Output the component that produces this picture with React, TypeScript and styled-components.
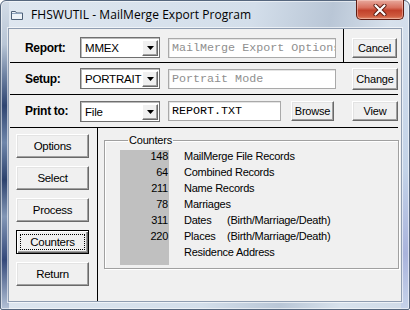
import React from 'react'
import styled, { createGlobalStyle, css } from 'styled-components'

const GlobalStyle = createGlobalStyle`
  html, body {
    margin: 0;
    padding: 0;
    background: #fff;
  }
  body {
    width: 410px;
    height: 310px;
    overflow: hidden;
    font-family: "Liberation Sans", Arial, sans-serif;
    font-size: 11px;
    color: #000;
  }
`

const Window = styled.div`
  box-sizing: border-box;
  width: 410px;
  height: 310px;
  display: flex;
  flex-direction: column;
  padding: 0 7px 7px 7px;
  border: 1px solid #56677e;
  border-radius: 6px 6px 2px 2px;
  box-shadow: inset 0 0 0 1px rgba(255, 255, 255, 0.55);
  background:
    linear-gradient(
        180deg,
        #d3dce7 0%,
        #b9c6d6 14%,
        #6f83a3 24%,
        #2f4571 34%,
        #6f86aa 46%,
        #2c426d 58%,
        #8397b6 70%,
        #34497a 84%,
        #b4c2d6 100%
      )
      left top / 8px 100% no-repeat,
    linear-gradient(180deg, #d6e0ec 0%, #c3d3e8 55%, #a9b3dc 82%, #c6d3ea 100%) right
      top / 8px 100% no-repeat,
    linear-gradient(100deg, #dfe7f0 0%, #d3deea 55%, #b9c6d6 72%, #d7e1ec 85%, #cfdae7 100%);
`

const TitleBar = styled.div`
  height: 27px;
  display: flex;
  align-items: center;
  gap: 8px;
`

const TitleIcon = styled.svg`
  margin-left: 3px;
  flex: none;
`

const TitleText = styled.span`
  font-family: "Open Sans", "Noto Sans", sans-serif;
  font-size: 12px;
  color: #000;
  letter-spacing: 0.05px;
`

const CloseButton = styled.div`
  box-sizing: border-box;
  align-self: flex-start;
  margin: -1px -2px 0 auto;
  width: 48px;
  height: 20px;
  display: flex;
  align-items: center;
  justify-content: center;
  border: 1px solid #5e1c12;
  border-top: none;
  border-radius: 0 0 5px 5px;
  background: linear-gradient(180deg, #e8aa9e 0%, #d8705e 40%, #c2412b 55%, #cf5b3f 85%, #e08a6c 100%);
  box-shadow: inset 0 0 0 1px rgba(255, 220, 210, 0.45);
`

const Client = styled.div`
  flex: 1;
  display: flex;
  flex-direction: column;
  padding: 0 3px 0 1px;
  background: #f0f0f0;
  border: 1px solid #8f9db1;
  box-shadow: 0 0 0 1px rgba(255, 255, 255, 0.6);
`

const Row = styled.div<{ $h: number; $pt?: number }>`
  box-sizing: border-box;
  height: ${(p) => p.$h}px;
  display: flex;
  align-items: center;
  padding: ${(p) => p.$pt ?? 0}px 0 0 15px;
  border-bottom: 1px solid #000;
`

const Label = styled.span`
  width: 55px;
  flex: none;
  font-size: 12px;
  font-weight: bold;
  letter-spacing: -0.3px;
`

const Combo = styled.div`
  box-sizing: border-box;
  width: 80px;
  height: 21px;
  flex: none;
  display: flex;
  padding: 2px 1px 1px 2px;
  background: #fff;
  border: 1px solid #6f6f6f;
  box-shadow: inset 1px 1px 0 #b9b9b9;
`

const ComboValue = styled.span`
  flex: 1;
  padding-left: 2px;
  font-size: 11.5px;
  letter-spacing: -0.2px;
  line-height: 16px;
  white-space: nowrap;
`

const ComboArrow = styled.span`
  box-sizing: border-box;
  width: 16px;
  display: flex;
  align-items: center;
  justify-content: center;
  background: #f0f0f0;
  border: 1px solid;
  border-color: #fff #696969 #696969 #fff;
  box-shadow: inset -1px -1px 0 #a0a0a0;
`

const TextField = styled.div<{ $w: number; $muted?: boolean }>`
  box-sizing: border-box;
  width: ${(p) => p.$w}px;
  height: 20px;
  flex: none;
  margin-left: 8px;
  padding-left: 3px;
  background: #fff;
  border: 1px solid #a9a9a9;
  box-shadow: inset 1px 1px 0 #e4e4e4;
  font-family: "Liberation Mono", "Courier New", monospace;
  font-size: 11.7px;
  line-height: 18px;
  color: ${(p) => (p.$muted ? '#8f8f8f' : '#000')};
  white-space: nowrap;
  overflow: hidden;
`

const Separator = styled.span<{ $pt: number }>`
  align-self: stretch;
  width: 1px;
  margin: -${(p) => p.$pt}px 0 0 7px;
  background: #000;
`

const raised = css`
  box-sizing: border-box;
  background: #f0f0f0;
  border: 1px solid;
  border-color: #fff #696969 #696969 #fff;
  box-shadow: inset -1px -1px 0 #a0a0a0, inset 1px 1px 0 #e3e3e3;
  font-family: "Liberation Sans", Arial, sans-serif;
  font-size: 11px;
  letter-spacing: -0.2px;
  color: #000;
  display: flex;
  align-items: center;
  justify-content: center;
  padding: 0;
`

const Button = styled.button<{ $w: number; $h: number; $ml?: number }>`
  ${raised};
  flex: none;
  width: ${(p) => p.$w}px;
  height: ${(p) => p.$h}px;
  margin-left: ${(p) => p.$ml ?? 0}px;
`

const Lower = styled.div`
  flex: 1;
  display: flex;
`

const SideColumn = styled.div`
  width: 81px;
  flex: none;
  display: flex;
  flex-direction: column;
  gap: 8px;
  padding: 6px 0 0 6px;
  border-right: 1px solid #000;
`

const SideButton = styled.button<{ $focused?: boolean }>`
  ${raised};
  position: relative;
  width: 73px;
  height: 24px;
  font-size: 11.5px;
  letter-spacing: -0.3px;
  ${(p) =>
    p.$focused &&
    css`
      border: 1px solid #000;
      box-shadow: inset 1px 1px 0 #fff, inset -1px -1px 0 #696969, inset -2px -2px 0 #a0a0a0;
      &::after {
        content: '';
        position: absolute;
        inset: 3px;
        border: 1px dotted #000;
      }
    `}
`

const GroupBox = styled.fieldset`
  box-sizing: border-box;
  align-self: flex-start;
  flex: 1;
  height: 135px;
  min-width: 0;
  margin: 6px -1px 0 6px;
  padding: 3px 0 0 15px;
  border: 1px solid #a0a0a0;
  box-shadow: 1px 1px 0 #fff, inset 1px 1px 0 #fff;
`

const Legend = styled.legend`
  margin-left: 8px;
  padding: 0 1px;
  font-size: 11px;
  letter-spacing: -0.2px;
  line-height: 13px;
`

const Counters = styled.div`
  display: flex;
`

const NumberColumn = styled.div`
  width: 49px;
  height: 115px;
  background: #c0c0c0;
  text-align: right;
`

const LabelColumn = styled.div`
  margin-left: 15px;
  white-space: nowrap;
`

const Line = styled.div`
  height: 16px;
  line-height: 12px;
  font-size: 11px;
  letter-spacing: -0.25px;
  padding-right: 1px;
`

const LineName = styled.span`
  display: inline-block;
  width: 43px;
`

const counters = [
  { n: '148', label: 'MailMerge File Records' },
  { n: '64', label: 'Combined Records' },
  { n: '211', label: 'Name Records' },
  { n: '78', label: 'Marriages' },
  { n: '311', label: 'Dates', note: '(Birth/Marriage/Death)' },
  { n: '220', label: 'Places', note: '(Birth/Marriage/Death)' },
  { n: '', label: 'Residence Address' },
]

const Arrow = () => (
  <svg width="7" height="4" viewBox="0 0 7 4">
    <path d="M0 0h7L3.5 4z" fill="#000" />
  </svg>
)

const ComboBox = ({ value }: { value: string }) => (
  <Combo>
    <ComboValue>{value}</ComboValue>
    <ComboArrow>
      <Arrow />
    </ComboArrow>
  </Combo>
)

export default function App() {
  return (
    <>
      <GlobalStyle />
      <Window>
        <TitleBar>
          <TitleIcon width="12" height="10" viewBox="0 0 12 10">
            <path d="M0.5 1.5h4l1 1.5h6v6.5h-11z" fill="#eef3f8" stroke="#4e6077" />
            <path d="M1 3.5h10" stroke="#8ea3bd" />
          </TitleIcon>
          <TitleText>FHSWUTIL - MailMerge Export Program</TitleText>
          <CloseButton>
            <svg width="14" height="12" viewBox="0 0 14 12">
              <path d="M2.5 1.5l9 9M11.5 1.5l-9 9" stroke="#5a1a10" strokeWidth="4" strokeLinecap="round" />
              <path d="M2.5 1.5l9 9M11.5 1.5l-9 9" stroke="#fff" strokeWidth="2.2" strokeLinecap="round" />
            </svg>
          </CloseButton>
        </TitleBar>
        <Client>
          <Row $h={34} $pt={4}>
            <Label>Report:</Label>
            <ComboBox value="MMEX" />
            <TextField $w={168} $muted>
              MailMerge Export Options
            </TextField>
            <Separator $pt={4} />
            <Button $w={45} $h={20} $ml={8}>
              Cancel
            </Button>
          </Row>
          <Row $h={32}>
            <Label>Setup:</Label>
            <ComboBox value="PORTRAIT" />
            <TextField $w={168} $muted>
              Portrait Mode
            </TextField>
            <Button $w={46} $h={22} $ml={16}>
              Change
            </Button>
          </Row>
          <Row $h={33}>
            <Label>Print to:</Label>
            <ComboBox value="File" />
            <TextField $w={113}>REPORT.TXT</TextField>
            <Button $w={43} $h={20} $ml={10}>
              Browse
            </Button>
            <Button $w={46} $h={20} $ml={18}>
              View
            </Button>
          </Row>
          <Lower>
            <SideColumn>
              <SideButton>Options</SideButton>
              <SideButton>Select</SideButton>
              <SideButton>Process</SideButton>
              <SideButton $focused>Counters</SideButton>
              <SideButton>Return</SideButton>
            </SideColumn>
            <GroupBox>
              <Legend>Counters</Legend>
              <Counters>
                <NumberColumn>
                  {counters.map((c, i) => (
                    <Line key={i}>{c.n}</Line>
                  ))}
                </NumberColumn>
                <LabelColumn>
                  {counters.map((c, i) => (
                    <Line key={i}>
                      {c.note ? (
                        <>
                          <LineName>{c.label}</LineName>
                          {c.note}
                        </>
                      ) : (
                        c.label
                      )}
                    </Line>
                  ))}
                </LabelColumn>
              </Counters>
            </GroupBox>
          </Lower>
        </Client>
      </Window>
    </>
  )
}
